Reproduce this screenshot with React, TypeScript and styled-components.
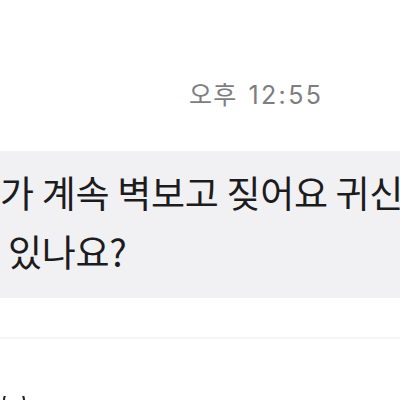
import React from "react";
import styled, { createGlobalStyle } from "styled-components";

const Global = createGlobalStyle`
  html, body { margin: 0; padding: 0; background: #ffffff; }
  body { font-family: "Noto Sans CJK KR", "Noto Sans", sans-serif; }
`;

const Screen = styled.div`
  width: 400px;
  height: 400px;
  overflow: hidden;
  background: #ffffff;
  display: flex;
  flex-direction: column;
`;

const TimeRow = styled.div`
  height: 151px;
  padding-left: 189px;
  padding-top: 75px;
  box-sizing: border-box;
  font-size: 25px;
  line-height: 36px;
  color: #7d7d82;
  letter-spacing: 1.2px;
  white-space: nowrap;
`;

const Clock = styled.span`
  font-family: "Inter", "Liberation Sans", sans-serif;
  font-size: 25px;
  letter-spacing: 2.4px;
  margin-left: 11px;
`;

const Bubble = styled.div`
  height: 147px;
  background: #f1f1f3;
  box-sizing: border-box;
  padding-top: 12px;
  display: flex;
  flex-direction: column;
  overflow: hidden;
`;

const Line = styled.div<{ $indent: number }>`
  padding-left: ${(p) => p.$indent}px;
  font-size: 37px;
  line-height: 59px;
  color: #1c1c1e;
  white-space: nowrap;
  letter-spacing: -0.3px;
`;

const Gap = styled.div`
  height: 39px;
`;

const Divider = styled.div`
  height: 2px;
  background: #f4f4f6;
`;

const Footer = styled.div`
  flex: 1;
  display: flex;
  align-items: flex-end;
  padding-left: 3px;
`;

export default function App() {
  return (
    <Screen>
      <Global />
      <TimeRow>
        오후<Clock>12:55</Clock>
      </TimeRow>
      <Bubble>
        <Line $indent={0}>가 계속 벽보고 짖어요 귀신</Line>
        <Line $indent={8}>있나요?</Line>
      </Bubble>
      <Gap />
      <Divider />
      <Footer>
        <svg width="22" height="4" viewBox="0 0 22 4">
          <path d="M1 4 A10 10 0 0 1 21 4" fill="none" stroke="#222" strokeWidth="2" />
        </svg>
      </Footer>
    </Screen>
  );
}
